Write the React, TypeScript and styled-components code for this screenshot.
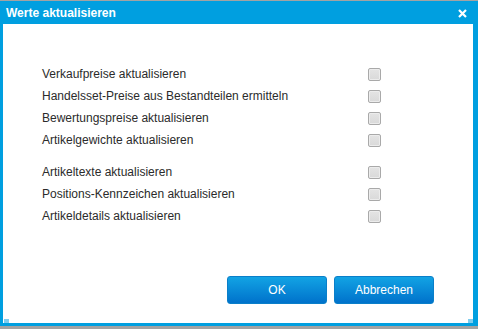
import React from "react";
import styled, { createGlobalStyle } from "styled-components";

const GlobalStyle = createGlobalStyle`
  html, body {
    margin: 0;
    padding: 0;
    background: #a3a3a3;
    overflow: hidden;
  }
`;

const Screen = styled.div`
  width: 478px;
  height: 329px;
  padding-top: 1px;
  box-sizing: border-box;
  background: #a3a3a3;
  font-family: "Liberation Sans", Arial, sans-serif;
`;

const Dialog = styled.div`
  position: relative;
  width: 478px;
  height: 325px;
  box-sizing: border-box;
  background: #009fe0;
  border-left: 3px solid #009fe0;
  border-right: 5px solid #009fe0;
  border-bottom: 3px solid #009fe0;
  display: flex;
  flex-direction: column;
`;

const TitleBar = styled.div`
  height: 23px;
  display: flex;
  align-items: center;
  justify-content: space-between;
  padding: 0 6px 0 3px;
  color: #fff;
`;

const Title = styled.span`
  font-size: 12px;
  font-weight: bold;
  padding-top: 1px;
`;

const CloseButton = styled.button`
  border: none;
  background: none;
  padding: 0;
  width: 10px;
  height: 10px;
  display: flex;
  align-items: center;
  justify-content: center;
  cursor: pointer;
  margin-top: 2px;
`;

const Body = styled.div`
  flex: 1;
  background: #fff;
  display: flex;
  flex-direction: column;
  padding: 39px 39px 19px 39px;
`;

const Group = styled.div<{ $gap: number }>`
  display: grid;
  grid-template-columns: 326px 13px;
  grid-auto-rows: 22px;
  align-items: center;
  margin-bottom: ${(p) => p.$gap}px;
`;

const Label = styled.label`
  font-size: 12px;
  color: #2b2b2b;
`;

const Box = styled.span`
  width: 11px;
  height: 11px;
  border: 1px solid #a9a9a9;
  border-radius: 2px;
  background: linear-gradient(#e4e4e4, #d9d9d9);
  box-shadow: inset 0 0 0 1px #ececec;
  margin-top: 1px;
`;

const Footer = styled.div`
  margin-top: auto;
  display: flex;
  justify-content: flex-end;
  gap: 7px;
`;

const Button = styled.button`
  width: 100px;
  height: 28px;
  border: 1px solid #0a7fc9;
  border-radius: 3px;
  background: linear-gradient(#12a3e4, #0072cb);
  color: #fff;
  font-family: "Liberation Sans", Arial, sans-serif;
  font-size: 12px;
  padding: 0;
  cursor: pointer;
`;

const Grip = styled.span<{ $side: "left" | "right" }>`
  position: absolute;
  bottom: 0;
  ${(p) => (p.$side === "left" ? "left: 1px;" : "right: 0;")}
  width: 5px;
  height: 4px;
  background: #7fcdef;
`;

const groups = [
  [
    "Verkaufpreise aktualisieren",
    "Handelsset-Preise aus Bestandteilen ermitteln",
    "Bewertungspreise aktualisieren",
    "Artikelgewichte aktualisieren",
  ],
  [
    "Artikeltexte aktualisieren",
    "Positions-Kennzeichen aktualisieren",
    "Artikeldetails aktualisieren",
  ],
];

export default function App() {
  return (
    <>
      <GlobalStyle />
      <Screen>
        <Dialog>
          <TitleBar>
            <Title>Werte aktualisieren</Title>
            <CloseButton aria-label="Schließen">
              <svg width="9" height="9" viewBox="0 0 9 9">
                <path d="M1 1L8 8M8 1L1 8" stroke="#fff" strokeWidth="2.2" />
              </svg>
            </CloseButton>
          </TitleBar>
          <Body>
            {groups.map((items, i) => (
              <Group key={i} $gap={i === 0 ? 10 : 0}>
                {items.map((text) => (
                  <React.Fragment key={text}>
                    <Label>{text}</Label>
                    <Box />
                  </React.Fragment>
                ))}
              </Group>
            ))}
            <Footer>
              <Button>OK</Button>
              <Button>Abbrechen</Button>
            </Footer>
          </Body>
          <Grip $side="left" />
          <Grip $side="right" />
        </Dialog>
      </Screen>
    </>
  );
}
